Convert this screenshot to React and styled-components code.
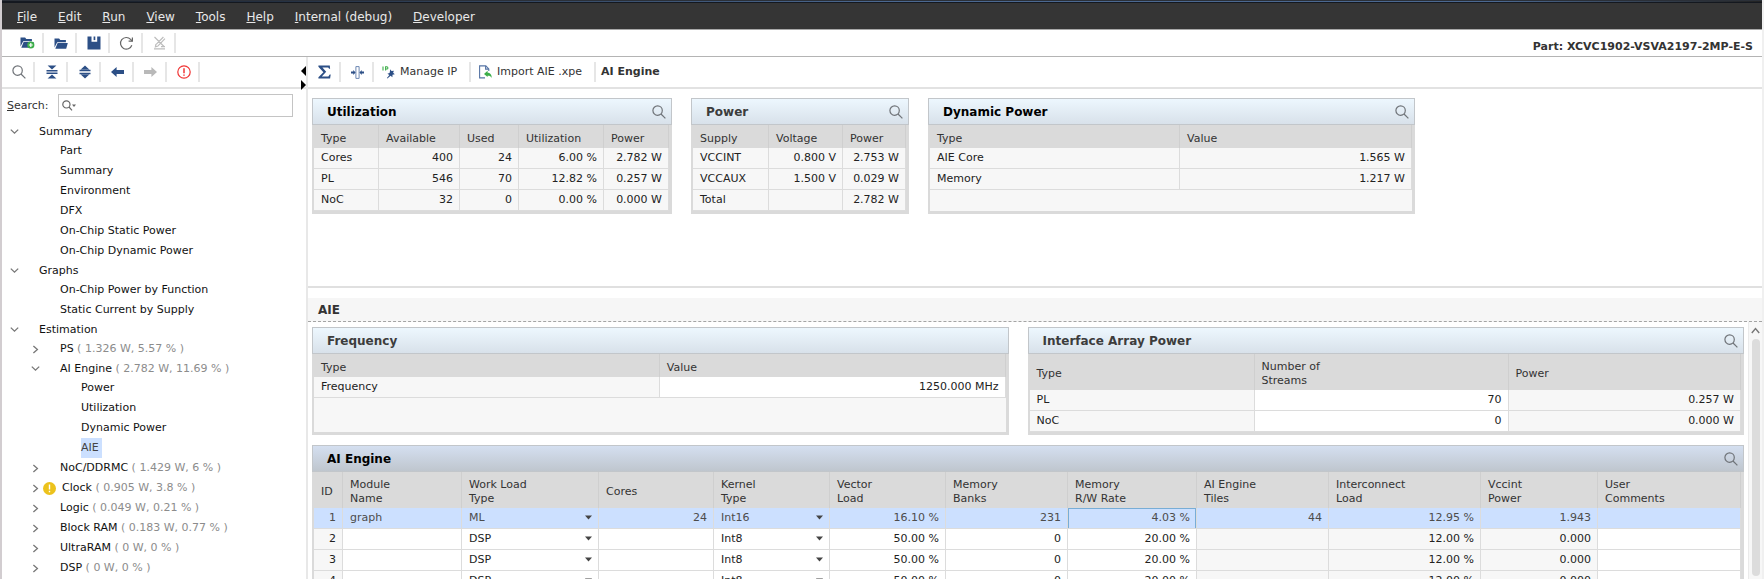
import React from "react";
import styled, { createGlobalStyle, css } from "styled-components";

const NAVY = "#2c4f86";

const GlobalStyle = createGlobalStyle`
  *, *::before, *::after { box-sizing: border-box; }
  body {
    margin: 0;
    background: #fff;
    color: #333;
    font: 11px/14px "DejaVu Sans", sans-serif;
  }
  button, input, select { font: inherit; color: inherit; }
`;

const Window = styled.div`
  display: flex;
  flex-direction: column;
  height: 100vh;
  overflow: hidden;
  border-left: 2px solid #d2cdd0;
  border-right: 2px solid #f0f0f0;
`;

const TopEdge = styled.div`
  flex: none;
  height: 3px;
  border-top: 1px solid #2b3038;
  border-bottom: 1px solid #14181f;
  background: linear-gradient(90deg, #14181f, #4b6890 50%, #4b6890 85%, #222);
`;

const MenuBar = styled.nav`
  flex: none;
  display: flex;
  align-items: center;
  gap: 21px;
  height: 27px;
  padding: 2px 0 0 15px;
  background: #353535;
  border-bottom: 1px solid #a8a8a8;
`;

const MenuItem = styled.button`
  padding: 0;
  border: 0;
  background: none;
  color: #e8e8e8;
  font-size: 12px;
  line-height: 16px;
  white-space: nowrap;
`;

const FileBar = styled.div`
  flex: none;
  display: flex;
  align-items: center;
  height: 27px;
  padding-left: 9px;
  border-bottom: 1px solid #b4b4b4;
`;

const PartName = styled.strong`
  margin-left: auto;
  padding: 8px 9px 0 0;
  font-size: 11px;
`;

const Columns = styled.div`
  flex: 1;
  display: flex;
  min-height: 0;
`;

const Sidebar = styled.aside`
  flex: none;
  width: 304px;
  overflow: hidden;
`;

const Divider = styled.div`
  position: relative;
  flex: none;
  width: 2px;
  background: #e8e8e8;
`;

const CollapseHandles = styled.div`
  position: absolute;
  top: 9px;
  right: 2px;
  display: grid;
  gap: 4px;
`;

const Handle = styled.button`
  display: block;
  padding: 0;
  border: 0;
  background: none;
  svg { display: block; }
`;

const Main = styled.main`
  flex: 1;
  display: flex;
  flex-direction: column;
  min-width: 0;
`;

const Toolbar = styled.div`
  flex: none;
  display: flex;
  align-items: center;
  height: 32px;
  border-bottom: 2px solid #e2e2e2;
`;

const Tool = styled.button`
  display: flex;
  align-items: center;
  justify-content: center;
  gap: 5px;
  min-width: 33px;
  height: 20px;
  padding: ${(p) => (p.$labelled ? "0 12px 0 8px" : "0 0 0 2px")};
  border: 0;
  border-right: 2px solid #e6e6e6;
  background: none;
  white-space: nowrap;
  svg { flex: none; }
`;

const Crumb = styled.strong`
  padding-left: 5px;
  font-size: 11px;
`;

const SearchRow = styled.div`
  display: flex;
  align-items: center;
  gap: 9px;
  padding: 5px 13px 5px 5px;
`;

const SearchField = styled.div`
  flex: 1;
  display: flex;
  align-items: center;
  gap: 4px;
  height: 23px;
  padding: 0 3px;
  border: 1px solid #c4c4c4;
`;

const SearchInput = styled.input`
  flex: 1;
  min-width: 0;
  padding: 0;
  border: 0;
  outline: 0;
  background: none;
`;

const Tree = styled.ul`
  margin: 0;
  padding: 0;
  list-style: none;
`;

const TreeRow = styled.li`
  display: flex;
  align-items: center;
  height: ${(p) => (p.$open ? 19 : 20)}px;
  padding-left: ${(p) => [6, 27, 48][p.$level]}px;
  color: #111;
  white-space: pre;
`;

const Twisty = styled.button`
  display: flex;
  justify-content: center;
  width: 31px;
  padding: 0 19px 0 0;
  border: 0;
  background: none;
  svg { flex: none; }
`;

const TreeIcon = styled.span`
  display: flex;
  width: 19px;
  margin-left: -17px;
`;

const TreeLabel = styled.span`
  height: 100%;
  line-height: 19px;
  ${(p) => p.$selected && css`
    padding-right: 3px;
    background: #cce0ff;
    color: #444;
  `}
`;

const Usage = styled.span`
  color: #8c8c8c;
`;

const Overview = styled.section`
  flex: none;
  min-height: 199px;
  padding: 9px 4px;
  border-bottom: 2px solid #e0e0e0;
`;

const PanelRow = styled.div`
  display: flex;
  gap: 19px;
`;

const DetailTitle = styled.h2`
  flex: none;
  margin: 10px 0 0;
  padding: 0 10px;
  height: 24px;
  font-size: 12px;
  line-height: 24px;
  background: #f6f6f6;
  border-bottom: 1px dashed #a4a4a4;
`;

const DetailScroll = styled.div`
  flex: 1;
  display: flex;
  min-height: 0;
`;

const Detail = styled.div`
  flex: 1;
  display: flex;
  flex-direction: column;
  gap: 10px;
  min-width: 0;
  padding: 5px 4px 0 4px;
  overflow: hidden;
`;

const ScrollTrack = styled.div`
  flex: none;
  display: flex;
  flex-direction: column;
  align-items: center;
  gap: 5px;
  width: 14px;
  padding-top: 5px;
  background: #f7f7f7;
  border-left: 1px solid #eaeaea;
`;

const ScrollThumb = styled.div`
  flex: 1;
  width: 8px;
  margin-bottom: 3px;
  border-radius: 4px;
  background: #dcdcdc;
`;

const PanelBox = styled.section`
  flex: ${(p) => p.$flex || "none"};
  display: flex;
  flex-direction: column;
  min-width: 0;
`;

const PanelHead = styled.header`
  display: flex;
  align-items: center;
  justify-content: space-between;
  height: 27px;
  padding: 0 5px 0 14px;
  border: 1px solid #c2c6ca;
  background: ${(p) =>
    p.$active
      ? "linear-gradient(#d4dff0, #bfc6ce)"
      : "linear-gradient(#edf7fe, #d8e1ea)"};
`;

const PanelTitle = styled.h3`
  margin: 0;
  font-size: 12px;
  line-height: 16px;
  color: ${(p) => (p.$soft ? "#3c3c3c" : "#000")};
`;

const IconButton = styled.button`
  display: flex;
  padding: 0;
  border: 0;
  background: none;
`;

const PanelBody = styled.div`
  flex: 1;
  border: solid #dadada;
  border-width: 0 3px 3px 2px;
  background: #f7f7f7;
`;

const Grid = styled.table`
  width: 100%;
  border-collapse: separate;
  border-spacing: 0;
  table-layout: fixed;
`;

const HeadCell = styled.th`
  height: ${(p) => (p.$tall ? 36 : 23)}px;
  padding: 4px 6px 0 7px;
  text-align: left;
  font-weight: normal;
  white-space: pre;
  background: #dadada;
  border-right: 1px solid #cfcfcf;
`;

const Cell = styled.td`
  height: 21px;
  padding: 0 6px 1px 7px;
  white-space: nowrap;
  text-align: ${(p) => (p.$right ? "right" : "left")};
  background: ${(p) => (p.$selected ? "#cce0ff" : p.$editable ? "#fff" : "#f7f7f7")};
  color: ${(p) => (p.$selected ? "#4c4c4c" : "#222")};
  border-right: 1px solid #dcdcdc;
  border-bottom: 1px solid #dcdcdc;
  ${(p) => p.$focus && css`
    box-shadow: inset 1px 1px #78add6, inset -1px 0 #78add6;
  `}
`;

const Picker = styled.span`
  display: grid;
  align-items: center;
  svg { grid-area: 1 / 1; justify-self: end; pointer-events: none; }
`;

const Choice = styled.select`
  grid-area: 1 / 1;
  width: 100%;
  padding: 0;
  border: 0;
  appearance: none;
  background: none;
`;

/* ---------- icons ---------- */

const Magnifier = ({ size = 14, color = "#6f7378" }) => (
  <svg width={size} height={size} viewBox="0 0 14 14" fill="none" stroke={color} strokeWidth="1.2" aria-hidden="true">
    <circle cx="5.6" cy="5.6" r="4.7" />
    <path d="M9 9l4.4 4.4" />
  </svg>
);

const Chevron = ({ down }) => (
  <svg width="9" height="9" viewBox="0 0 9 9" fill="none" stroke="#777" strokeWidth="1.3" aria-hidden="true">
    <path d={down ? "M.8 2.6l3.7 3.6 3.7-3.6" : "M2.4 1l4 3.5-4 3.5"} />
  </svg>
);

const folderBack = "M0.5 10.5V1.5h4.6l1.2 1.4h5.6v2.4H3.2z";
const folderFront = "M3.6 6h10.2l-1.6 5.8H1.3z";

const NewProject = () => (
  <svg width="15" height="14" viewBox="0 0 15 14" aria-hidden="true">
    <path d={folderBack} fill={NAVY} />
    <path d={folderFront} fill={NAVY} />
    <circle cx="10.8" cy="9" r="3.6" fill="#3cae49" />
    <path d="M10.8 7v4M8.8 9h4" stroke="#fff" strokeWidth="1.2" />
  </svg>
);

const OpenProject = () => (
  <svg width="14" height="13" viewBox="0 0 14 13" aria-hidden="true">
    <path d={folderBack} fill={NAVY} />
    <path d={folderFront} fill={NAVY} />
  </svg>
);

const Save = () => (
  <svg width="14" height="14" viewBox="0 0 14 14" aria-hidden="true">
    <path d="M.5.5h4v5.2h5.7V.5h3.3v13H.5z" fill={NAVY} />
    <path d="M6.6.5h1.7v3.6H6.6z" fill={NAVY} />
  </svg>
);

const Refresh = () => (
  <svg width="15" height="15" viewBox="0 0 15 15" fill="none" stroke="#666" strokeWidth="1.2" aria-hidden="true">
    <path d="M12.8 9.2A5.8 5.8 0 1 1 11.6 3.4L13.2 5" />
    <path d="M13.4 1.4v3.8H9.6" />
  </svg>
);

const NoEdit = () => (
  <svg width="13" height="14" viewBox="0 0 13 14" fill="none" stroke="#bdbdbd" strokeWidth="1.2" aria-hidden="true">
    <path d="M1.5 1l9.5 9.5M10.4 1L3.4 8.2M12 2.6L5 9.8M3 8l-.6 2.8L5.2 10M1 12.8h11M8 10.6h4" />
  </svg>
);

const CollapseAll = () => (
  <svg width="12" height="14" viewBox="0 0 12 14" fill={NAVY} aria-hidden="true">
    <path d="M1.6.4h8.8L6 4.4zM.5 5h11v1.4H.5zM.5 7.6h11V9H.5zM6 9.6l4.4 4H1.6z" />
  </svg>
);

const ExpandAll = () => (
  <svg width="12" height="14" viewBox="0 0 12 14" fill={NAVY} aria-hidden="true">
    <path d="M6 .4l4.3 4H1.7zM.5 4.8h11v1.4H.5zM.5 7.8h11v1.4H.5zM1.7 9.6h8.6L6 13.6z" />
  </svg>
);

const Arrow = ({ back }) => (
  <svg width="13" height="12" viewBox="0 0 13 12" aria-hidden="true">
    {back ? (
      <path d="M0 6l5.6-5v3H13v4H5.6v3z" fill={NAVY} />
    ) : (
      <path d="M13 6L7.4 1v3H0v4h7.4v3z" fill="#b9b9b9" />
    )}
  </svg>
);

const ErrorRing = () => (
  <svg width="14" height="14" viewBox="0 0 14 14" fill="none" stroke="#f03535" strokeWidth="1.2" aria-hidden="true">
    <circle cx="7" cy="7" r="6.2" />
    <path d="M7 3.2v5" strokeWidth="1.5" />
    <path d="M7 9.4v1.4" strokeWidth="1.5" />
  </svg>
);

const Warning = () => (
  <svg width="13" height="13" viewBox="0 0 13 13" aria-hidden="true">
    <circle cx="6.5" cy="6.5" r="6.5" fill="#ecc21c" />
    <path d="M6.5 2.6v4.8M6.5 8.8v1.5" stroke="#fff" strokeWidth="1.4" />
  </svg>
);

const ErrorDot = () => (
  <svg width="13" height="13" viewBox="0 0 13 13" aria-hidden="true">
    <circle cx="6.5" cy="6.5" r="6.5" fill="#f04848" />
    <path d="M6.5 2.6v4.8M6.5 8.8v1.5" stroke="#fff" strokeWidth="1.4" />
  </svg>
);

const Sigma = () => (
  <svg width="13" height="14" viewBox="0 0 13 14" aria-hidden="true">
    <path d="M.4.6h11.4l.3 3.2h-1L10.2 2.4H4.4L8.2 6.8 3.8 11.4h6.6l1.3-1.9h1l-.6 4H.4v-1.2L5.4 7.2.4 1.8z" fill={NAVY} />
  </svg>
);

const FitColumns = () => (
  <svg width="13" height="13" viewBox="0 0 13 13" aria-hidden="true">
    <path d="M4.9.6h3.2v11.8H4.9z" fill="#fff" stroke="#6d88b3" />
    <path d="M0 5.6h2.3V3.9L4.6 6.5 2.3 9.1V7.4H0zM13 5.6h-2.3V3.9L8.4 6.5l2.3 2.6V7.4H13z" fill={NAVY} />
  </svg>
);

const IpIcon = () => (
  <svg width="13" height="13" viewBox="0 0 13 13" aria-hidden="true">
    <path d="M1 .5v4M3.6 4.5V.8h1.2a1.1 1.1 0 0 1 0 2.2H3.8" fill="none" stroke="#3cae49" strokeWidth="1.1" />
    <path d="M8.3 3.2l1.2 1.9 2.4-.4-.8 2.1 1.7 1.5-2.3.4-.1 2.5-1.8-1.5-3.2 2.9-.5-.6 2.5-3.1-2-1.2 2.2-.7z" fill={NAVY} />
  </svg>
);

const ImportIcon = () => (
  <svg width="13" height="14" viewBox="0 0 13 14" aria-hidden="true">
    <path d="M6 12.9H.6V.9h6.2l3 3v2M6.6 1v3.1h3" fill="none" stroke="#5674a5" strokeWidth="1.1" />
    <path d="M5 8.9l3.6-3.2v2c2.4 0 4 1.4 4.2 5.2-1-1.6-2.2-2.2-4.2-2.1V12z" fill="#3cae49" />
  </svg>
);

const Caret = () => (
  <svg width="7" height="5" viewBox="0 0 7 5" aria-hidden="true">
    <path d="M0 .6h7L3.5 4.4z" fill="#444" />
  </svg>
);

/* ---------- data ---------- */

const menus = ["File", "Edit", "Run", "View", "Tools", "Help", "Internal (debug)", "Developer"];

const tree = [
  { level: 0, label: "Summary", open: true },
  { level: 1, label: "Part" },
  { level: 1, label: "Summary" },
  { level: 1, label: "Environment" },
  { level: 1, label: "DFX" },
  { level: 1, label: "On-Chip Static Power" },
  { level: 1, label: "On-Chip Dynamic Power" },
  { level: 0, label: "Graphs", open: true },
  { level: 1, label: "On-Chip Power by Function" },
  { level: 1, label: "Static Current by Supply" },
  { level: 0, label: "Estimation", open: true },
  { level: 1, label: "PS", usage: "1.326 W, 5.57 %", closed: true },
  { level: 1, label: "AI Engine", usage: "2.782 W, 11.69 %", open: true },
  { level: 2, label: "Power" },
  { level: 2, label: "Utilization" },
  { level: 2, label: "Dynamic Power" },
  { level: 2, label: "AIE", selected: true },
  { level: 1, label: "NoC/DDRMC", usage: "1.429 W, 6 %", closed: true },
  { level: 1, label: "Clock", usage: "0.905 W, 3.8 %", closed: true, icon: <Warning /> },
  { level: 1, label: "Logic", usage: "0.049 W, 0.21 %", closed: true },
  { level: 1, label: "Block RAM", usage: "0.183 W, 0.77 %", closed: true },
  { level: 1, label: "UltraRAM", usage: "0 W, 0 %", closed: true },
  { level: 1, label: "DSP", usage: "0 W, 0 %", closed: true },
  { level: 1, label: "", closed: true, icon: <ErrorDot /> },
];

const utilization = {
  columns: [
    { name: "Type", width: 65 },
    { name: "Available", width: 81, right: true },
    { name: "Used", width: 59, right: true },
    { name: "Utilization", width: 85, right: true },
    { name: "Power", right: true },
  ],
  rows: [
    ["Cores", "400", "24", "6.00 %", "2.782 W"],
    ["PL", "546", "70", "12.82 %", "0.257 W"],
    ["NoC", "32", "0", "0.00 %", "0.000 W"],
  ],
};

const power = {
  columns: [
    { name: "Supply", width: 76 },
    { name: "Voltage", width: 74, right: true },
    { name: "Power", right: true },
  ],
  rows: [
    ["VCCINT", "0.800 V", "2.753 W"],
    ["VCCAUX", "1.500 V", "0.029 W"],
    ["Total", "", "2.782 W"],
  ],
};

const dynamicPower = {
  columns: [{ name: "Type", width: 250 }, { name: "Value", right: true }],
  rows: [
    ["AIE Core", "1.565 W"],
    ["Memory", "1.217 W"],
  ],
};

const frequency = {
  columns: [{ name: "Type", width: "50%" }, { name: "Value", right: true, editable: true }],
  rows: [["Frequency", "1250.000 MHz"]],
};

const interfacePower = {
  tall: true,
  columns: [
    { name: "Type", width: 225 },
    { name: "Number of\nStreams", width: 254, right: true, editable: true },
    { name: "Power", right: true },
  ],
  rows: [
    ["PL", "70", "0.257 W"],
    ["NoC", "0", "0.000 W"],
  ],
};

const engine = {
  tall: true,
  selectedRow: 0,
  focusColumn: 7,
  columns: [
    { name: "ID", width: 29, right: true },
    { name: "Module\nName", width: 119, editable: true },
    { name: "Work Load\nType", width: 137, editable: true, choices: ["ML", "DSP"] },
    { name: "Cores", width: 115, right: true, editable: true },
    { name: "Kernel\nType", width: 116, editable: true, choices: ["Int8", "Int16"] },
    { name: "Vector\nLoad", width: 116, right: true, editable: true },
    { name: "Memory\nBanks", width: 122, right: true, editable: true },
    { name: "Memory\nR/W Rate", width: 129, right: true, editable: true },
    { name: "AI Engine\nTiles", width: 132, right: true },
    { name: "Interconnect\nLoad", width: 152, right: true },
    { name: "Vccint\nPower", width: 117, right: true },
    { name: "User\nComments", editable: true },
  ],
  rows: [
    ["1", "graph", "ML", "24", "Int16", "16.10 %", "231", "4.03 %", "44", "12.95 %", "1.943", ""],
    ["2", "", "DSP", "", "Int8", "50.00 %", "0", "20.00 %", "", "12.00 %", "0.000", ""],
    ["3", "", "DSP", "", "Int8", "50.00 %", "0", "20.00 %", "", "12.00 %", "0.000", ""],
    ["4", "", "DSP", "", "Int8", "50.00 %", "0", "20.00 %", "", "12.00 %", "0.000", ""],
  ],
};

/* ---------- parts ---------- */

function DataTable({ data }) {
  const { columns, rows, tall, selectedRow, focusColumn } = data;
  return (
    <Grid>
      <colgroup>
        {columns.map((c) => <col key={c.name} width={c.width} />)}
      </colgroup>
      <thead>
        <tr>
          {columns.map((c) => <HeadCell key={c.name} scope="col" $tall={tall}>{c.name}</HeadCell>)}
        </tr>
      </thead>
      <tbody>
        {rows.map((row, r) => (
          <tr key={r}>
            {row.map((value, i) => {
              const c = columns[i];
              const selected = r === selectedRow;
              return (
                <Cell key={i} $right={c.right} $editable={c.editable} $selected={selected} $focus={selected && i === focusColumn}>
                  {c.choices ? (
                    <Picker>
                      <Choice defaultValue={value} aria-label={`${c.name.replace("\n", " ")}, row ${row[0]}`}>
                        {c.choices.map((o) => <option key={o}>{o}</option>)}
                      </Choice>
                      <Caret />
                    </Picker>
                  ) : value}
                </Cell>
              );
            })}
          </tr>
        ))}
      </tbody>
    </Grid>
  );
}

function Panel({ title, data, flex, soft, active, search = true }) {
  return (
    <PanelBox $flex={flex}>
      <PanelHead $active={active}>
        <PanelTitle $soft={soft}>{title}</PanelTitle>
        {search && <IconButton aria-label={`Search ${title}`}><Magnifier /></IconButton>}
      </PanelHead>
      <PanelBody><DataTable data={data} /></PanelBody>
    </PanelBox>
  );
}

export default function App() {
  return (
    <>
      <GlobalStyle />
      <Window>
        <TopEdge />
        <MenuBar>
          {menus.map((m) => <MenuItem key={m}><u>{m[0]}</u>{m.slice(1)}</MenuItem>)}
        </MenuBar>
        <FileBar>
          <Tool aria-label="New project"><NewProject /></Tool>
          <Tool aria-label="Open project"><OpenProject /></Tool>
          <Tool aria-label="Save"><Save /></Tool>
          <Tool aria-label="Refresh"><Refresh /></Tool>
          <Tool aria-label="Clear edits" disabled><NoEdit /></Tool>
          <PartName>Part: XCVC1902-VSVA2197-2MP-E-S</PartName>
        </FileBar>
        <Columns>
          <Sidebar>
            <Toolbar>
              <Tool aria-label="Find"><Magnifier /></Tool>
              <Tool aria-label="Collapse all"><CollapseAll /></Tool>
              <Tool aria-label="Expand all"><ExpandAll /></Tool>
              <Tool aria-label="Back"><Arrow back /></Tool>
              <Tool aria-label="Forward" disabled><Arrow /></Tool>
              <Tool aria-label="Show errors"><ErrorRing /></Tool>
            </Toolbar>
            <SearchRow>
              <label htmlFor="tree-search"><u>S</u>earch:</label>
              <SearchField>
                <svg width="14" height="11" viewBox="0 0 14 11" fill="none" stroke="#666" strokeWidth="1.2" aria-hidden="true">
                  <circle cx="4.4" cy="4.4" r="3.6" />
                  <path d="M7 7l3 3.4" />
                  <path d="M10 4.4h4L12 7z" fill="#666" stroke="none" />
                </svg>
                <SearchInput id="tree-search" type="text" />
              </SearchField>
            </SearchRow>
            <Tree role="tree">
              {tree.map((n, i) => (
                <TreeRow key={i} role="treeitem" $level={n.level} $open={n.open} aria-selected={!!n.selected}>
                  {n.open || n.closed ? (
                    <Twisty aria-label={n.open ? "Collapse" : "Expand"}><Chevron down={n.open} /></Twisty>
                  ) : (
                    <Twisty as="span" />
                  )}
                  {n.icon && <TreeIcon>{n.icon}</TreeIcon>}
                  <TreeLabel $selected={n.selected}>
                    {n.label}
                    {n.usage && <Usage>{` ( ${n.usage} )`}</Usage>}
                  </TreeLabel>
                </TreeRow>
              ))}
            </Tree>
          </Sidebar>
          <Divider>
            <CollapseHandles>
              <Handle aria-label="Hide left pane">
                <svg width="5" height="10" viewBox="0 0 5 10"><path d="M5 0v10L0 5z" /></svg>
              </Handle>
              <Handle aria-label="Hide right pane">
                <svg width="5" height="10" viewBox="0 0 5 10"><path d="M0 0v10l5-5z" /></svg>
              </Handle>
            </CollapseHandles>
          </Divider>
          <Main>
            <Toolbar>
              <Tool aria-label="Totals"><Sigma /></Tool>
              <Tool aria-label="Fit columns"><FitColumns /></Tool>
              <Tool $labelled><IpIcon />Manage IP</Tool>
              <Tool $labelled><ImportIcon />Import AIE .xpe</Tool>
              <Crumb>AI Engine</Crumb>
            </Toolbar>
            <Overview>
              <PanelRow>
                <Panel title="Utilization" data={utilization} flex="0 1 360px" />
                <Panel title="Power" data={power} flex="0 1 218px" soft />
                <Panel title="Dynamic Power" data={dynamicPower} flex="0 1 487px" />
              </PanelRow>
            </Overview>
            <DetailTitle>AIE</DetailTitle>
            <DetailScroll>
              <Detail>
                <PanelRow>
                  <Panel title="Frequency" data={frequency} flex="696 1 0" soft search={false} />
                  <Panel title="Interface Array Power" data={interfacePower} flex="716 1 0" soft />
                </PanelRow>
                <Panel title="AI Engine" data={engine} active />
              </Detail>
              <ScrollTrack>
                <svg width="9" height="7" viewBox="0 0 9 7" fill="none" stroke="#777" strokeWidth="1.4" aria-hidden="true">
                  <path d="M.8 6l3.7-4.4L8.2 6" />
                </svg>
                <ScrollThumb />
              </ScrollTrack>
            </DetailScroll>
          </Main>
        </Columns>
      </Window>
    </>
  );
}
